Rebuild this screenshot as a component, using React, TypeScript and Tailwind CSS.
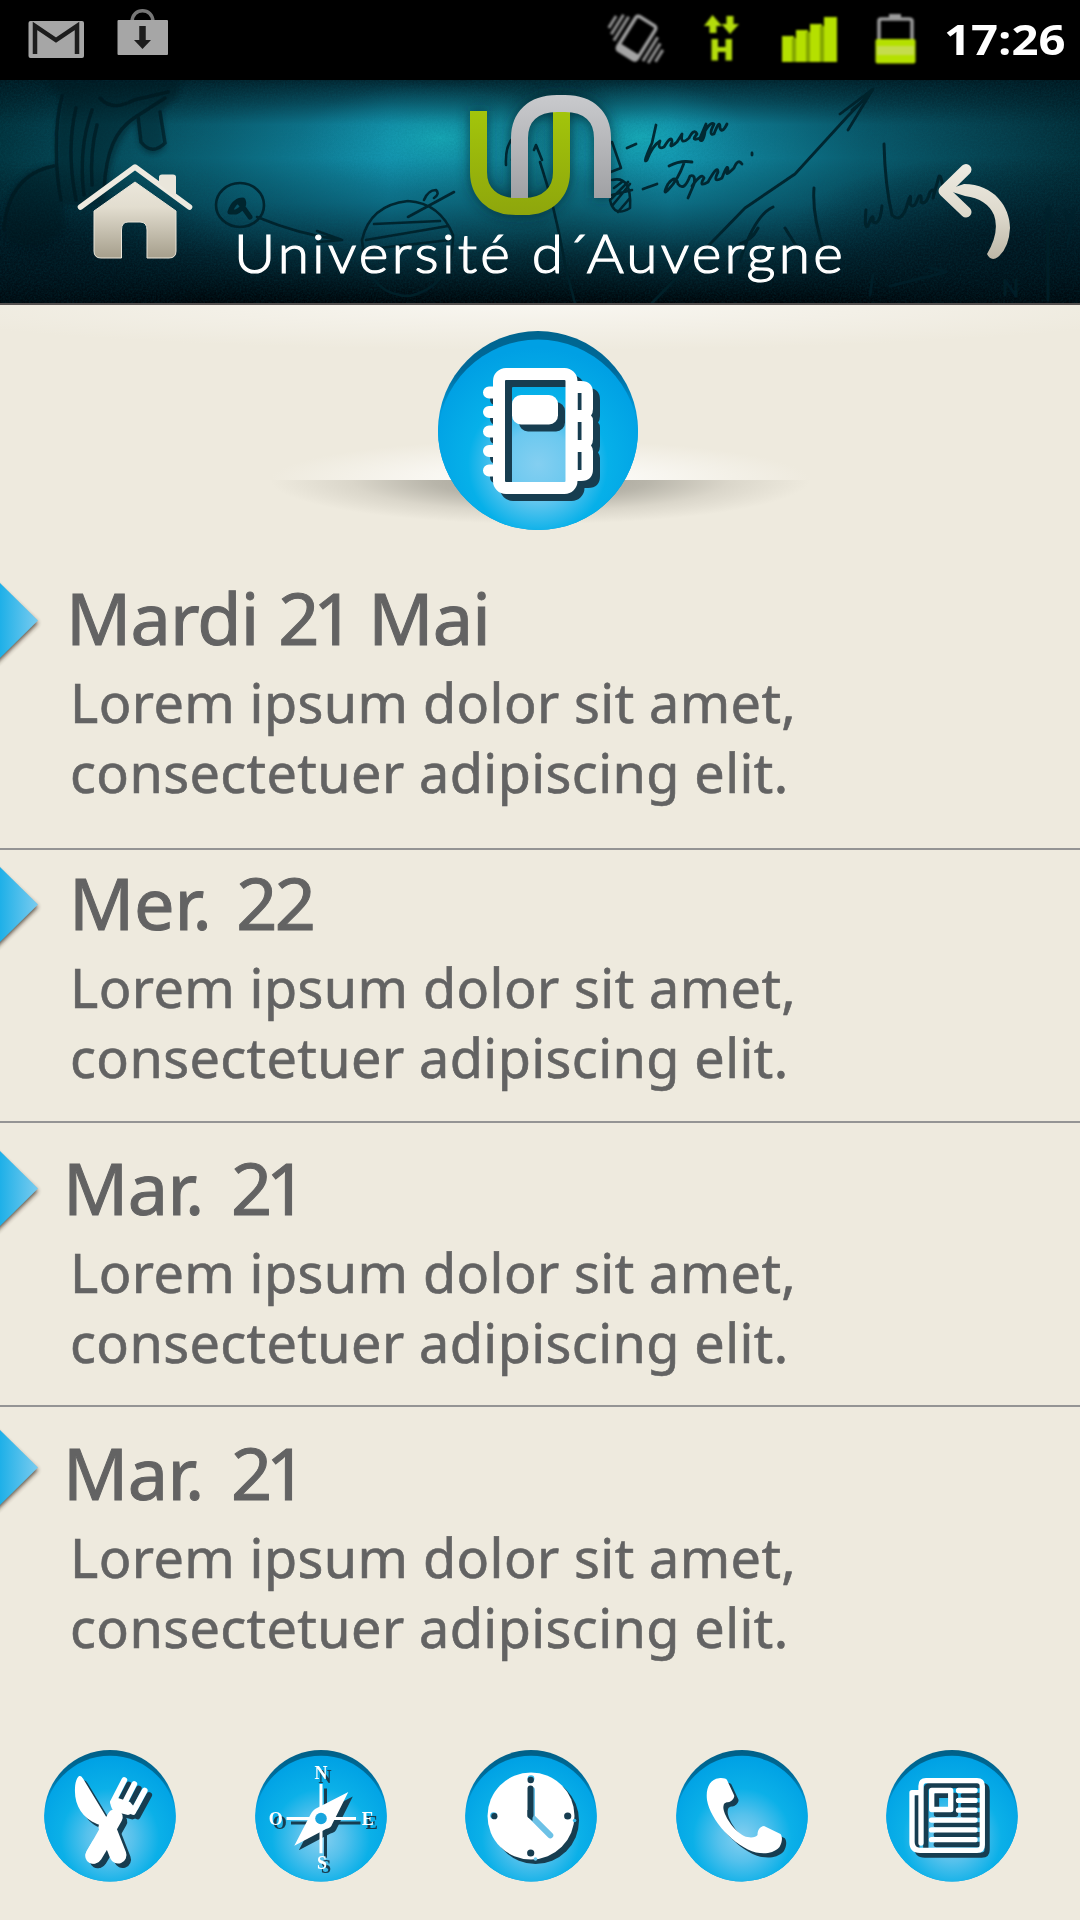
import React, { ReactNode } from "react";

const DARK = "#173d50";

function Extruded({ d, children }: { d: number; children: ReactNode }) {
  return (
    <>
      <g transform={`translate(${d} ${d})`} color={DARK}>{children}</g>
      <g color="#fff">{children}</g>
    </>
  );
}

function Disc({ id, children }: { id: string; children: ReactNode }) {
  return (
    <svg className="block size-[132px] shrink-0" viewBox="0 0 132 132">
      <defs>
        <radialGradient id={id} cx="0.5" cy="0.62" r="0.6">
          <stop offset="0" stopColor="#86cff0" />
          <stop offset="0.3" stopColor="#55c1ec" />
          <stop offset="0.62" stopColor="#0bb0e8" />
          <stop offset="1" stopColor="#00a2e5" />
        </radialGradient>
        <linearGradient id={id + "r"} x1="0" y1="0" x2="0" y2="1">
          <stop offset="0" stopColor="#005f87" />
          <stop offset="0.2" stopColor="#006c9a" />
          <stop offset="0.38" stopColor="#0098d6" />
          <stop offset="0.5" stopColor="#00a2e5" />
        </linearGradient>
        <clipPath id={id + "c"}><circle cx="66" cy="65.7" r="65.7" /></clipPath>
      </defs>
      <circle cx="66" cy="65.7" r="65.7" fill={`url(#${id}r)`} />
      <g clipPath={`url(#${id}c)`}>
        <circle cx="66" cy="72" r="66.2" fill={`url(#${id})`} />
      </g>
      {children}
    </svg>
  );
}

function Cutlery() {
  return (
    <Extruded d={4.5}>
      <path fill="currentColor" d="M35.3 26C37 25.5 38 27 39 28.5L63.5 69L62 79C58 76 56 75 53 74C38 68 30 55 31 38C31 33 33 27 35.3 26Z" />
      <path stroke="currentColor" strokeWidth="17" strokeLinecap="round" d="M63 77L74 105" />
      <path stroke="currentColor" strokeWidth="15.5" strokeLinecap="round" d="M49 106L71 67" />
      <path stroke="currentColor" strokeWidth="17" strokeLinecap="round" d="M50 105L56 95" />
      <path stroke="currentColor" strokeWidth="5.8" strokeLinecap="round" d="M80.3 30L69 52M90.3 34L80 54M100.7 40.5L89 62" />
      <path fill="currentColor" d="M66.3 51C66 57 69 61 72 62L84 65C88 64 91 61 92 59L86 52L74 48Z" />
    </Extruded>
  );
}

function Compass() {
  return (
    <>
      <Extruded d={4.5}>
        <path stroke="currentColor" strokeWidth="3" d="M66 34V103.3M31.5 68.5H101" />
        <path fill="currentColor" d="M93.3 42L77.5 73.5Q76 78 71 79L39.3 95.7L55.5 64.5Q58 59.5 62 58Z" />
      </Extruded>
      <g className="[filter:drop-shadow(4.5px_4.5px_0_#173d50)]" fill="#fff" fontFamily="Liberation Serif, serif" fontWeight="700" fontSize="18" textAnchor="middle">
        <text x="66" y="29">N</text>
        <text x="20.7" y="75">O</text>
        <text x="112.7" y="75">E</text>
        <text x="67" y="119">S</text>
      </g>
      <circle cx="66" cy="68.5" r="5.8" fill="#17a5de" />
    </>
  );
}

function Clock() {
  return (
    <>
      <Extruded d={4.5}><circle cx="66" cy="66" r="43.5" fill="currentColor" /></Extruded>
      <circle cx="66" cy="28.6" r="3.4" fill="#3bb8e8" />
      <circle cx="28.6" cy="65.6" r="3.4" fill="#3bb8e8" />
      <circle cx="109.6" cy="70.5" r="1.8" fill="#3bb8e8" />
      <circle cx="70.5" cy="109" r="1.8" fill="#6cc8ec" />
      <path fill="none" stroke="#6cc1e6" strokeWidth="6" strokeLinecap="round" d="M67 40V67L85.3 85.3" />
      <path fill="none" stroke={DARK} strokeWidth="6" strokeLinecap="round" d="M65.5 38.5V65" />
      <path fill={DARK} d="M62.5 60H67.5V71L62.5 67Z" />
      <g fill={DARK}>
        <circle cx="65.7" cy="30" r="3.2" />
        <circle cx="29.4" cy="66.2" r="3.1" />
        <circle cx="102.7" cy="66" r="3.6" />
        <circle cx="65.7" cy="103" r="3.6" />
      </g>
    </>
  );
}

function Phone() {
  return (
    <Extruded d={4.3}>
      <path fill="currentColor" d="M43 28.2C47 27.8 50 28.5 51 30L58.2 45.5C58.5 48 56 51 53 52C50 52.5 48 52.5 47.5 56C46 62 56 80 68 86C74 88.5 80 87.5 81.5 85C81.5 80 84 76.5 88 76L104.500 84C107 87 106 93 103.5 97C97 104 88 104 80 102.5C59 97 34 70 31 50C29.5 38 34 29 43 28.2Z" />
    </Extruded>
  );
}

function Newspaper() {
  return (
    <Extruded d={4.8}>
      <g fill="none" stroke="currentColor" strokeWidth="5.3" strokeLinecap="round" strokeLinejoin="round">
        <path d="M35 93V36Q35 30.7 40 30.7H91Q96.3 30.7 96.3 36V95Q96.3 100.3 91 100.3H34Q26 100.3 26 92V42.7H34" />
        <rect x="45.7" y="40.5" width="19" height="19" />
        <path d="M72.5 40.5H89M72.5 50.4H89M72.5 60.2H89M45.5 70.1H89M45.5 79.9H89M45.5 89.7H89" />
      </g>
    </Extruded>
  );
}

function NotebookShapes() {
  return (
    <>
      <g fill="none" stroke="currentColor" strokeLinecap="round">
        <rect x="61" y="43" width="72.5" height="114" rx="7" strokeWidth="12" />
        <path strokeWidth="12" d="M51 61.5H60M51 81H60M51 100.5H60M51 120H60M51 139.5H60" />
      </g>
      <path fillRule="evenodd" fill="currentColor" d="M136 50H143Q155 50 155 62V78Q155 82 153 84.5Q155 86 155 90V108Q155 112 153 114.5Q155 117 155 120V138Q155 150 143 150H136ZM139.5 62V79H143.5V62ZM139.5 91V109H143.5V91ZM139.5 121V139H143.5V121Z" />
      <rect x="74" y="64" width="46" height="29.5" rx="9" fill="currentColor" />
    </>
  );
}

function NotebookBadge() {
  return (
    <svg className="relative block h-[199px] w-[200px]" viewBox="0 0 200 199">
      <defs>
        <radialGradient id="nb" cx="0.5" cy="0.62" r="0.58">
          <stop offset="0" stopColor="#84cff1" />
          <stop offset="0.3" stopColor="#6ac8ef" />
          <stop offset="0.6" stopColor="#06b0e9" />
          <stop offset="1" stopColor="#00a0e4" />
        </radialGradient>
        <linearGradient id="nbr" x1="0" y1="0" x2="0" y2="1">
          <stop offset="0" stopColor="#00658f" />
          <stop offset="0.2" stopColor="#00699a" />
          <stop offset="0.4" stopColor="#009bdc" />
        </linearGradient>
        <clipPath id="nbc"><ellipse cx="100" cy="99.5" rx="100" ry="99.5" /></clipPath>
      </defs>
      <ellipse cx="100" cy="99.5" rx="100" ry="99.5" fill="url(#nbr)" />
      <g clipPath="url(#nbc)"><circle cx="100" cy="109" r="100.5" fill="url(#nb)" /></g>
      <Extruded d={7}><NotebookShapes /></Extruded>
    </svg>
  );
}

function StatusBar() {
  return (
    <div className="flex h-20 items-start bg-black pl-7 pr-[14px]">
      <svg className="mt-5 h-[39px] w-[57px] blur-[0.7px]" viewBox="0 0 57 39">
        <rect x="0.5" y="1" width="55.5" height="37" rx="2" fill="#a6a6a6" />
        <path d="M7 34V6L28 20L49 6V34" fill="none" stroke="#1d1d1d" strokeWidth="4.5" />
      </svg>
      <svg className="ml-[32px] mt-2 h-[48px] w-[52px] blur-[0.7px]" viewBox="0 0 52 48">
        <path d="M15 14C15 -1 36 -1 36 14" fill="none" stroke="#777" strokeWidth="3.5" />
        <rect x="0.5" y="12" width="50.5" height="35" rx="1" fill="#a6a6a6" />
        <path d="M25.5 18V35" stroke="#1d1d1d" strokeWidth="6.5" />
        <path d="M17 32H34L25.5 41Z" fill="#1d1d1d" />
      </svg>
      <div className="ml-auto flex items-start">
        <svg className="mt-[15px] h-[50px] w-[62px] overflow-visible blur-[0.8px]" viewBox="0 0 62 50" fill="none">
          <g transform="translate(1 0) rotate(32 31 24)">
            <rect x="19.5" y="3" width="23" height="40" rx="3" stroke="#a0a0a0" strokeWidth="3.5" />
            <path d="M19.5 36H42.5V43H19.5Z" fill="#a5a5a5" />
            <path d="M13 9V37M7.5 10V33M2 15V29M48.5 11V39M54 15V38M59.5 19V33" stroke="#8f8f8f" strokeWidth="3" />
          </g>
        </svg>
        <svg className="ml-[38px] mt-[15px] h-[47px] w-[36px] blur-[0.8px]" viewBox="0 0 36 47" fill="#b4dc0c">
          <path d="M8.5 0L18 11H12.5V18H5.5V11H0ZM26 19L17.5 9H22.5V1H29.5V9H35Z" />
          <path d="M7.5 24H14V32H21.5V24H28V45.5H21.5V37H14V45.5H7.5Z" />
        </svg>
        <svg className="ml-[42px] mt-4 h-[47px] w-[56px] blur-[0.8px]" viewBox="0 0 56 47">
          <path fill="#b5e000" d="M0 20H12V46H0ZM14 14H26V46H14ZM28 8H40V46H28ZM42 1H55V46H42Z" />
          <path fill="#83a600" d="M10 22H14V46H10ZM24 16H28V46H24ZM38 10H42V46H38Z" />
        </svg>
        <svg className="ml-[37px] mt-[13px] h-[52px] w-[42px] blur-[0.8px]" viewBox="0 0 42 52">
          <path d="M4 27V8Q4 6 6 6H34Q37 6 37 8V27" fill="none" stroke="#9b9b9b" strokeWidth="3.5" />
          <rect x="14" y="1" width="12" height="5" fill="#9b9b9b" />
          <rect x="0.5" y="26" width="40" height="24.5" rx="2" fill="#b5e000" />
          <rect x="2" y="33" width="37" height="9" fill="#c5dc4c" />
        </svg>
        <span className="ml-[27px] mt-[11px] block w-[122px] origin-left scale-x-[1.125] whitespace-nowrap font-['Open_Sans','Noto_Sans',sans-serif] text-[42px] font-bold leading-[56px] text-white blur-[0.5px]">17:26</span>
      </div>
    </div>
  );
}

function HeaderBackdrop() {
  return (
    <svg className="absolute inset-0 h-full w-full" viewBox="0 80 1080 223" preserveAspectRatio="none">
      <defs>
        <linearGradient id="across" x1="0" y1="0" x2="1" y2="0">
          <stop offset="0" stopColor="#03333e" />
          <stop offset="0.2" stopColor="#0b6276" />
          <stop offset="0.36" stopColor="#138fac" />
          <stop offset="0.5" stopColor="#117a8c" />
          <stop offset="0.62" stopColor="#1494af" />
          <stop offset="0.8" stopColor="#0a5b6e" />
          <stop offset="1" stopColor="#042e39" />
        </linearGradient>
        <linearGradient id="down" x1="0" y1="0" x2="0" y2="1">
          <stop offset="0" stopColor="#01141c" stopOpacity="0.85" />
          <stop offset="0.1" stopColor="#01141c" stopOpacity="0.5" />
          <stop offset="0.2" stopColor="#01141c" stopOpacity="0.08" />
          <stop offset="0.35" stopColor="#01141c" stopOpacity="0" />
          <stop offset="0.55" stopColor="#011a28" stopOpacity="0.3" />
          <stop offset="0.78" stopColor="#010f18" stopOpacity="0.77" />
          <stop offset="1" stopColor="#000408" stopOpacity="1" />
        </linearGradient>
        <radialGradient id="glow">
          <stop offset="0" stopColor="#1cc3c9" stopOpacity="0.55" />
          <stop offset="0.5" stopColor="#18b0c0" stopOpacity="0.2" />
          <stop offset="1" stopColor="#14a0b8" stopOpacity="0" />
        </radialGradient>
        <radialGradient id="shade">
          <stop offset="0" stopColor="#02131c" stopOpacity="0.8" />
          <stop offset="1" stopColor="#02131c" stopOpacity="0" />
        </radialGradient>
        <filter id="grain" x="0" y="0" width="100%" height="100%">
          <feTurbulence type="fractalNoise" baseFrequency="0.55" numOctaves="2" />
          <feColorMatrix values="0 0 0 0 0  0 0 0 0 0.15  0 0 0 0 0.2  1.2 0 0 0 -0.35" />
        </filter>
        <filter id="haze"><feGaussianBlur stdDeviation="2.5" /></filter>
        <filter id="ink"><feGaussianBlur stdDeviation="0.5" /></filter>
      </defs>
      <rect y="80" width="1080" height="223" fill="url(#across)" />
      <rect y="80" width="1080" height="223" fill="url(#down)" />
      <ellipse cx="440" cy="138" rx="140" ry="55" fill="url(#glow)" />
      <ellipse cx="640" cy="137" rx="110" ry="55" fill="url(#glow)" />
      <ellipse cx="40" cy="250" rx="190" ry="85" fill="url(#shade)" />
      <ellipse cx="1010" cy="245" rx="230" ry="90" fill="url(#shade)" />
      <rect y="80" width="1080" height="223" filter="url(#grain)" opacity="0.25" />
      <g fill="#02161f" opacity="0.4" filter="url(#haze)">
        <path d="M48 80C50 95 62 92 62 100C54 120 54 180 62 205H106C108 170 116 140 135 122L139 145Q150 162 165 148L162 110L178 96L181 80Z" />
        <path d="M58 90H180L162 112Q138 108 125 120Q100 100 88 130L82 200H60Q52 130 62 100Z" />
        <path d="M2 235Q5 165 58 165L66 230Q30 262 2 235Z" />
      </g>
      <path fill="none" stroke="#02161f" opacity="0.6" strokeWidth="3.5" strokeLinecap="round" filter="url(#ink)" d="M62 96C54 125 55 170 61 200M76 108Q66 150 76 200M92 110Q78 150 84 195M104 190C106 150 116 130 134 118L165 98M100 98Q112 112 134 100L168 92M138 116L141 142Q152 156 165 143L160 112M4 230Q8 175 54 166M97 125Q90 150 92 185" />
      <g fill="none" stroke="#01202b" strokeLinecap="round" strokeLinejoin="round" opacity="0.92" filter="url(#ink)">
        <g strokeWidth="2.6">
          <ellipse cx="240" cy="205" rx="24" ry="22" />
          <path d="M257 217Q300 235 342 240M317 231L342 240L318 242" />
          <path d="M408 201Q370 205 362 240Q366 296 410 296Q454 285 453 235Q440 203 408 201M374 224L440 221M366 240L448 226M362 250L450 240M408 217L454 192M424 200Q428 190 436 190Q440 194 434 198" />
          <path d="M506 165Q505 142 516 136L512 160M534 150L536 145L542 160M540 162Q556 210 566 270L575 303" />
          <path d="M612 142L621 168L608 173M612 180Q632 175 630 208Q614 218 610 200L628 182M612 195L632 190M612 206L630 184M614 188L622 182M618 212L630 198" />
        </g>
        <path strokeWidth="5" d="M230 212Q234 200 243 200Q246 207 236 212ZM240 203L250 217" />
        <g strokeWidth="2.8">
          <path d="M627 148L636 144M656 125L652 143Q642 165 647 160Q652 146 660 141Q657 150 664 147Q672 134 672 142Q668 150 677 142L682 134Q680 146 689 138Q694 128 697 134Q690 142 700 138L706 124Q704 144 700 140Q710 120 714 124Q708 136 714 134Q720 118 720 128Q722 134 727 124" />
          <path d="M643 189L657 184M669 166Q680 160 692 162M684 163Q678 180 668 190Q662 196 668 184Q676 174 678 184Q684 192 690 176Q696 174 694 184L688 198M692 186Q702 172 704 178Q698 188 708 182Q718 164 718 172Q712 184 722 178Q728 162 728 170Q724 178 734 168Q738 158 742 164M752 155V153" />
        </g>
        <path strokeWidth="2.8" d="M652 303L712 242L745 208L795 174L847 117L872 91M840 114L873 89L848 130M852 110L864 100" />
        <path strokeWidth="3" d="M740 260Q755 215 773 207M740 244Q752 240 758 228M814 188Q812 215 824 250M785 228L800 252M884 144Q885 185 892 215Q902 225 908 202Q912 190 910 204Q914 210 918 198Q922 192 921 202Q926 206 930 192Q936 186 933 198L938 180Q940 168 944 192M866 210Q864 230 868 226Q874 210 873 222Q880 226 882 206" />
        <path strokeWidth="3" opacity="0.8" d="M1048 300V206M1044 222L1048 206L1053 222M1065 210L1069 222L1074 210L1068 244M870 295L873 275M890 286L946 272L930 268M1005 295V280L1016 296V280" />
      </g>
    </svg>
  );
}

function BrandHeader() {
  return (
    <header className="relative flex h-[225px] items-start justify-between overflow-hidden border-b-2 border-[#555150] bg-black pl-[77px] pr-[68px]">
      <HeaderBackdrop />
      <svg className="relative mt-[83px] h-[98px] w-[116px]" viewBox="77 163 116 98">
        <defs>
          <linearGradient id="stone" x1="0" y1="163" x2="0" y2="261" gradientUnits="userSpaceOnUse">
            <stop offset="0" stopColor="#f2eee4" />
            <stop offset="0.45" stopColor="#e2ddcf" />
            <stop offset="1" stopColor="#a29b88" />
          </linearGradient>
        </defs>
        <path d="M80.5 207L135 167L189.5 207" fill="none" stroke="#eeeae0" strokeWidth="5.6" strokeLinecap="round" strokeLinejoin="round" />
        <path d="M159 181V177Q159 174.5 162 174.5H173Q176 174.5 176 177V198L159 184Z" fill="#eae6db" />
        <path d="M135 182L176 211V251Q176 258 169 258H147V230Q147 222 140 222H128Q121.5 222 121.5 230V258H101Q94 258 94 251V211Z" fill="url(#stone)" stroke="#e9e4d8" strokeWidth="1" />
      </svg>
      <div className="absolute left-1/2 top-[11px] flex w-[640px] -translate-x-1/2 flex-col items-center">
        <svg className="h-[134px] w-[160px] overflow-visible" viewBox="460 91 160 134" fill="none" strokeWidth="17">
          <defs>
            <linearGradient id="lime" x1="0" y1="110" x2="0" y2="215" gradientUnits="userSpaceOnUse">
              <stop offset="0" stopColor="#a3c50b" />
              <stop offset="1" stopColor="#8ea60c" />
            </linearGradient>
            <linearGradient id="silver" x1="0" y1="95" x2="0" y2="198" gradientUnits="userSpaceOnUse">
              <stop offset="0" stopColor="#c9cacd" />
              <stop offset="1" stopColor="#a0a1a4" />
            </linearGradient>
            <filter id="soft" x="-30%" y="-30%" width="160%" height="160%"><feGaussianBlur stdDeviation="7" /></filter>
          </defs>
          <g stroke="#02242c" opacity="0.7" filter="url(#soft)">
            <path d="M478.5 111V172C478.5 192 492 206.5 516 206.5H524C548 206.5 561.5 192 561.5 172V111" />
            <path d="M519.5 198V138C519.5 117 533 103.5 557 103.5H565C589 103.5 602.5 117 602.5 138V198" />
          </g>
          <path stroke="url(#lime)" d="M478.5 111V172C478.5 192 492 206.5 516 206.5H524C548 206.5 561.5 192 561.5 172V107" />
          <path stroke="url(#silver)" d="M519.5 198V138C519.5 117 533 103.5 557 103.5H565C589 103.5 602.5 117 602.5 138V198" />
        </svg>
        <h1 className="-mt-[5px] scale-x-[1.07] whitespace-pre font-['Lato',sans-serif] text-[53px] font-light leading-[66px] tracking-[3px] text-white [-webkit-text-stroke:1.2px_white]">Université d<span className="tracking-[-2px]">´</span>Auvergne</h1>
      </div>
      <svg className="relative mt-[82px] h-[100px] w-[76px]" viewBox="936 162 76 100" fill="none">
        <defs>
          <linearGradient id="ret" x1="0" y1="165" x2="0" y2="260" gradientUnits="userSpaceOnUse">
            <stop offset="0" stopColor="#eeebe2" />
            <stop offset="0.5" stopColor="#dedacd" />
            <stop offset="1" stopColor="#bcb6a6" />
          </linearGradient>
        </defs>
        <path d="M966 169.5L944 191L966 212" stroke="url(#ret)" strokeWidth="11" strokeLinecap="round" strokeLinejoin="round" />
        <path d="M946 190L964 184C994 184 1010 207 1010 228Q1009 248 998 257Q991 262 987 254Q1000 232 994 215Q987 199 965 196Z" fill="url(#ret)" />
      </svg>
    </header>
  );
}

function Hero() {
  return (
    <div className="relative flex h-[255px] justify-center bg-[radial-gradient(60%_45px_at_50%_0,#f8f6f0,#eeeade)] pt-[26px]">
      <div className="absolute left-[270px] top-[135px] h-[40px] w-[540px] bg-[radial-gradient(50%_100%_at_50%_100%,#ffffff,#f8f6f0_45%,#eeeade)]" />
      <div className="absolute left-[270px] top-[175px] h-[44px] w-[540px] bg-[radial-gradient(50%_100%_at_50%_0,#a09d92,#b8b5aa_40%,#dad6ca_70%,#eeeade)]" />
      <div className="-translate-x-[2px]"><NotebookBadge /></div>
    </div>
  );
}

function Marker({ className }: { className: string }) {
  return (
    <svg className={"absolute left-0 h-[90px] w-[48px] " + className} viewBox="0 0 48 90">
      <defs>
        <linearGradient id="mk" x1="0" y1="0" x2="1" y2="0">
          <stop offset="0" stopColor="#1eb0e8" />
          <stop offset="1" stopColor="#79cbef" />
        </linearGradient>
        <filter id="mks" x="-30%" y="-30%" width="170%" height="160%"><feGaussianBlur stdDeviation="2" /></filter>
      </defs>
      <path d="M-8 2L38 45L-8 90Z" fill="#3c3028" opacity="0.85" filter="url(#mks)" />
      <path d="M0 5L38 42.5L0 80Z" fill="url(#mk)" />
    </svg>
  );
}

function Entry({ title, row, marker, heading }: { title: ReactNode; row: string; marker: string; heading: string }) {
  return (
    <li className={"relative border-[#949494] " + row}>
      <Marker className={marker} />
      <h2 className={"whitespace-nowrap text-[72px] leading-[80px] [-webkit-text-stroke:1px_#636363] " + heading}>{title}</h2>
      <p className="mt-[10px] pl-[70px] text-[54px] leading-[70px] tracking-[0.4px] [-webkit-text-stroke:0.6px_#636363]">
        <span className="block whitespace-nowrap">Lorem ipsum dolor sit amet,</span>
        <span className="block whitespace-nowrap">consectetuer adipiscing elit.</span>
      </p>
    </li>
  );
}

const TWENTY_ONE = <span className="tracking-[-6px]">21</span>;

export default function App() {
  return (
    <div className="flex h-[1920px] w-[1080px] flex-col overflow-hidden bg-[#eeeade] font-['Noto_Sans',sans-serif] text-[#636363]">
      <StatusBar />
      <BrandHeader />
      <Hero />
      <ul className="flex-1">
        <Entry title={<>Mardi {TWENTY_ONE} Mai</>} row="h-[290px] border-b-2 pt-[17px]" marker="top-[18px]" heading="pl-[66px] tracking-[-0.9px] [word-spacing:2px]" />
        <Entry title={<>Mer. <span className="tracking-[-2.5px]">22</span></>} row="h-[273px] border-b-2 pt-[12px]" marker="top-[12px]" heading="pl-[69px] tracking-[-0.2px] [word-spacing:6px]" />
        <Entry title={<>Mar. {TWENTY_ONE}</>} row="h-[284px] border-b-2 pt-[24px]" marker="top-[23px]" heading="pl-[63px] tracking-[-0.6px] [word-spacing:9px]" />
        <Entry title={<>Mar. {TWENTY_ONE}</>} row="h-[290px] pt-[25px]" marker="top-[18px]" heading="pl-[63px] tracking-[-0.6px] [word-spacing:9px]" />
      </ul>
      <nav className="flex h-[170px] items-start justify-between pl-[44px] pr-[62px]">
        <Disc id="d1"><Cutlery /></Disc>
        <Disc id="d2"><Compass /></Disc>
        <Disc id="d3"><Clock /></Disc>
        <Disc id="d4"><Phone /></Disc>
        <Disc id="d5"><Newspaper /></Disc>
      </nav>
    </div>
  );
}
